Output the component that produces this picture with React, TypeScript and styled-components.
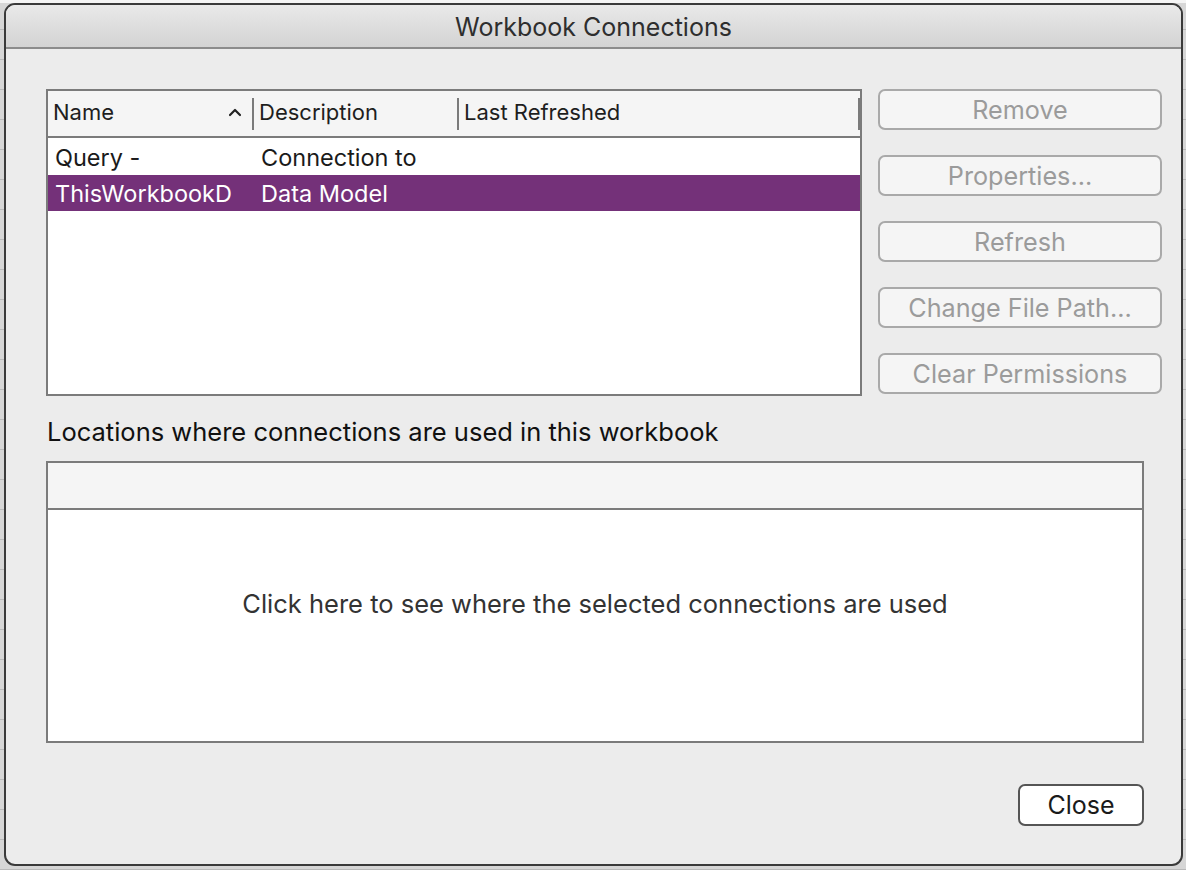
import React from "react";
import styled, { createGlobalStyle } from "styled-components";

const Global = createGlobalStyle`
  html, body { margin: 0; padding: 0; }
  body {
    background: #dcdcdc;
    font-family: Inter, "Noto Sans", "Liberation Sans", sans-serif;
    -webkit-font-smoothing: antialiased;
  }
`;

const Page = styled.div`
  width: 1186px;
  height: 870px;
  box-sizing: border-box;
  padding: 3px 3px 4px 4px;
  background:
    linear-gradient(#f4f4f4, #f4f4f4) top / 100% 3px no-repeat,
    repeating-linear-gradient(#d6d6d6 0 29px, #b9b9b9 29px 30px);
`;

const Window = styled.div`
  height: 100%;
  box-sizing: border-box;
  border: 2px solid #3a3a3a;
  border-radius: 11px;
  background: #ececec;
  overflow: hidden;
  display: flex;
  flex-direction: column;
`;

const TitleBar = styled.div`
  height: 41px;
  flex: none;
  display: flex;
  align-items: center;
  justify-content: center;
  background: linear-gradient(#e9e9e9, #d3d3d3);
  border-bottom: 2px solid #8c8c8c;
  color: #2e2e2e;
  font-size: 25px;
  padding-top: 1px;
`;

const Content = styled.div`
  flex: 1;
  display: flex;
  flex-direction: column;
  padding: 40px 19px 38px 40px;
`;

const TopRow = styled.div`
  display: flex;
  gap: 16px;
  align-items: flex-start;
`;

const ListBox = styled.div`
  width: 816px;
  height: 307px;
  box-sizing: border-box;
  border: 2px solid #7b7b7b;
  background: #ffffff;
  display: flex;
  flex-direction: column;
`;

const HeaderRow = styled.div`
  height: 45px;
  flex: none;
  display: grid;
  grid-template-columns: 206px 205px 1fr;
  background: #f5f5f5;
  border-bottom: 2px solid #7b7b7b;
  color: #1e1e1e;
  font-size: 22px;
`;

const HeaderCell = styled.div`
  display: flex;
  align-items: center;
  justify-content: space-between;
  padding: 0 2px 3px 5px;
  position: relative;
  &::after {
    content: "";
    position: absolute;
    right: 0;
    top: 7px;
    bottom: 6px;
    width: 2px;
    background: #7b7b7b;
  }
`;

const Caret = styled.svg`
  width: 14px;
  height: 10px;
  margin-right: 10px;
`;

const Rows = styled.div`
  padding-top: 1px;
  display: flex;
  flex-direction: column;
`;

const Row = styled.div<{ $selected?: boolean }>`
  height: 36px;
  display: grid;
  grid-template-columns: 206px 205px 1fr;
  align-items: center;
  background: ${(p) => (p.$selected ? "#743179" : "transparent")};
  color: ${(p) => (p.$selected ? "#ffffff" : "#1a1a1a")};
  font-size: 23.5px;
`;

const Cell = styled.div`
  padding-left: 7px;
  white-space: nowrap;
  overflow: hidden;
`;

const ButtonColumn = styled.div`
  width: 284px;
  display: flex;
  flex-direction: column;
  gap: 25px;
`;

const SideButton = styled.button`
  height: 41px;
  box-sizing: border-box;
  border: 2px solid #a9a9a9;
  border-radius: 7px;
  background: #f5f5f5;
  color: #9b9b9b;
  font-family: inherit;
  font-size: 25.2px;
  padding: 0;
  white-space: nowrap;
`;

const SectionLabel = styled.div`
  margin-top: 18px;
  height: 34px;
  display: flex;
  align-items: center;
  color: #111111;
  font-size: 25.5px;
  padding-left: 1px;
`;

const LocationsBox = styled.div`
  margin-top: 13px;
  width: 1098px;
  height: 282px;
  box-sizing: border-box;
  border: 2px solid #7b7b7b;
  background: #ffffff;
  display: flex;
  flex-direction: column;
`;

const LocationsHeader = styled.div`
  height: 45px;
  flex: none;
  background: #f5f5f5;
  border-bottom: 2px solid #7b7b7b;
`;

const LocationsBody = styled.div`
  flex: 1;
  display: flex;
  align-items: center;
  justify-content: center;
  color: #333333;
  font-size: 25.5px;
  padding-bottom: 44px;
`;

const Footer = styled.div`
  margin-top: auto;
  width: 1098px;
  display: flex;
  justify-content: flex-end;
`;

const CloseButton = styled.button`
  width: 126px;
  height: 42px;
  box-sizing: border-box;
  border: 2px solid #555555;
  border-radius: 7px;
  background: #ffffff;
  color: #1a1a1a;
  font-family: inherit;
  font-size: 25px;
  padding: 0;
`;

const buttons = [
  "Remove",
  "Properties...",
  "Refresh",
  "Change File Path...",
  "Clear Permissions",
];

export default function App() {
  return (
    <>
      <Global />
      <Page>
        <Window>
          <TitleBar>Workbook Connections</TitleBar>
          <Content>
            <TopRow>
              <ListBox>
                <HeaderRow>
                  <HeaderCell>
                    <span>Name</span>
                    <Caret viewBox="0 0 14 10">
                      <path
                        d="M2 8 L7 3 L12 8"
                        fill="none"
                        stroke="#222"
                        strokeWidth="2.2"
                        strokeLinecap="round"
                        strokeLinejoin="round"
                      />
                    </Caret>
                  </HeaderCell>
                  <HeaderCell>
                    <span>Description</span>
                  </HeaderCell>
                  <HeaderCell>
                    <span>Last Refreshed</span>
                  </HeaderCell>
                </HeaderRow>
                <Rows>
                  <Row>
                    <Cell>Query -</Cell>
                    <Cell>Connection to</Cell>
                    <Cell />
                  </Row>
                  <Row $selected>
                    <Cell>ThisWorkbookD</Cell>
                    <Cell>Data Model</Cell>
                    <Cell />
                  </Row>
                </Rows>
              </ListBox>
              <ButtonColumn>
                {buttons.map((b) => (
                  <SideButton key={b} disabled>
                    {b}
                  </SideButton>
                ))}
              </ButtonColumn>
            </TopRow>
            <SectionLabel>
              Locations where connections are used in this workbook
            </SectionLabel>
            <LocationsBox>
              <LocationsHeader />
              <LocationsBody>
                Click here to see where the selected connections are used
              </LocationsBody>
            </LocationsBox>
            <Footer>
              <CloseButton>Close</CloseButton>
            </Footer>
          </Content>
        </Window>
      </Page>
    </>
  );
}
